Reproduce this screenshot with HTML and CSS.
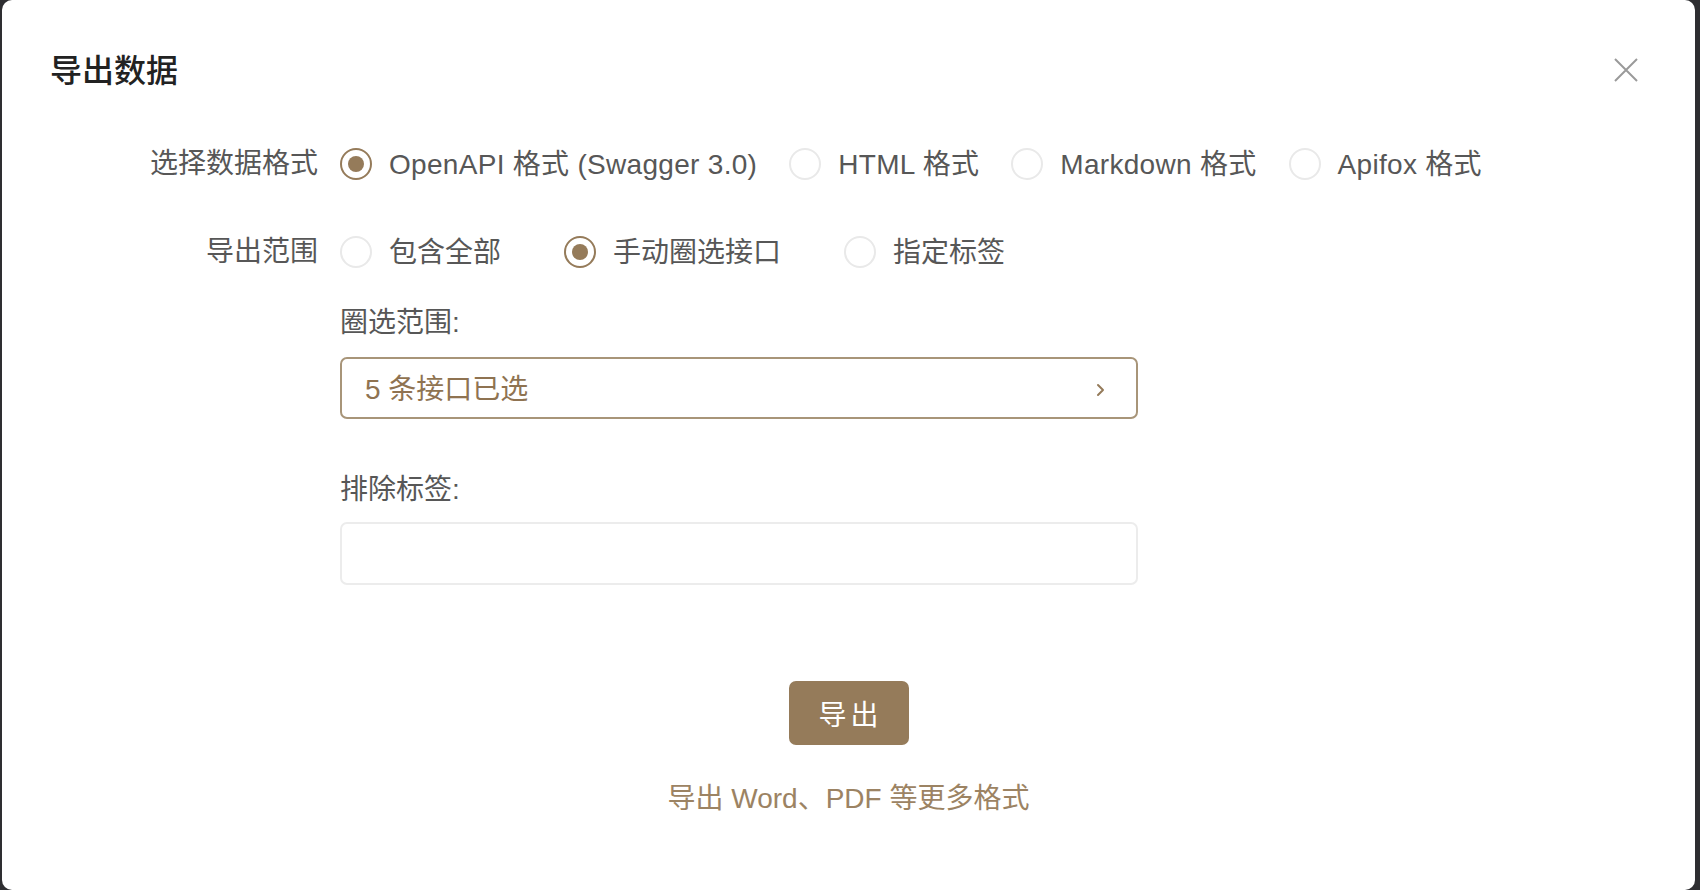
FILE: index.html
```html
<!DOCTYPE html>
<html lang="zh-CN">
<head>
<meta charset="utf-8">
<title>导出数据</title>
<link rel="stylesheet" href="styles.css">
</head>
<body>
<div class="modal">
  <div class="modal-header">
    <h2 class="modal-title">导出数据</h2>
    <button class="close" aria-label="关闭">
      <svg width="24" height="24" viewBox="0 0 24 24"><path d="M1 1 L23 23 M23 1 L1 23" stroke="#9a9a9a" stroke-width="2" fill="none"/></svg>
    </button>
  </div>
  <div class="form">
    <div class="row">
      <div class="label">选择数据格式</div>
      <div class="radios radios-format">
        <label class="radio checked"><span class="dot"></span><span class="text">OpenAPI 格式 (Swagger 3.0)</span></label>
        <label class="radio"><span class="dot"></span><span class="text">HTML 格式</span></label>
        <label class="radio"><span class="dot"></span><span class="text">Markdown 格式</span></label>
        <label class="radio"><span class="dot"></span><span class="text">Apifox 格式</span></label>
      </div>
    </div>
    <div class="row row-scope">
      <div class="label">导出范围</div>
      <div class="radios radios-scope">
        <label class="radio"><span class="dot"></span><span class="text">包含全部</span></label>
        <label class="radio checked"><span class="dot"></span><span class="text">手动圈选接口</span></label>
        <label class="radio"><span class="dot"></span><span class="text">指定标签</span></label>
      </div>
    </div>
    <div class="row row-sub">
      <div class="label"></div>
      <div class="fields">
        <div class="field-label">圈选范围:</div>
        <div class="select">
          <span class="select-value">5 条接口已选</span>
          <svg class="chevron" width="9" height="14" viewBox="0 0 9 14"><path d="M2 2 L7 7 L2 12" stroke="#957b5a" stroke-width="2" fill="none" stroke-linecap="round" stroke-linejoin="round"/></svg>
        </div>
        <div class="field-label field-label-2">排除标签:</div>
        <div class="input"></div>
      </div>
    </div>
  </div>
  <div class="actions">
    <button class="btn-primary">导 出</button>
    <a class="more">导出 Word、PDF 等更多格式</a>
  </div>
</div>
</body>
</html>
```

FILE: styles.css
```css
html, body {
  margin: 0;
  padding: 0;
}
body {
  background: #2e2e31;
  width: 1700px;
  height: 890px;
  overflow: hidden;
  font-family: "Liberation Sans", "Noto Sans CJK SC", sans-serif;
}
.modal {
  position: relative;
  margin: 0 5px 0 2px;
  height: 890px;
  background: #ffffff;
  border-radius: 10px;
  box-sizing: border-box;
}
.modal-header {
  padding: 48px 0 0 48px;
}
.modal-title {
  margin: 0;
  font-family: "Noto Sans CJK SC", sans-serif;
  font-size: 32px;
  line-height: 40px;
  font-weight: 500;
  color: #222222;
}
.close {
  position: absolute;
  top: 58px;
  right: 57px;
  width: 24px;
  height: 24px;
  padding: 0;
  border: 0;
  background: none;
  display: block;
}
.close svg { display: block; }
.form {
  margin-top: 56px;
}
.row {
  display: grid;
  grid-template-columns: 316px 798px;
  column-gap: 22px;
  align-items: start;
}
.row-scope {
  margin-top: 48px;
}
.label {
  text-align: right;
  font-size: 28px;
  line-height: 40px;
  color: #575757;
}
.radios {
  display: flex;
  align-items: center;
  height: 40px;
  white-space: nowrap;
}
.radios-format { gap: 32px; }
.radios-format .text { letter-spacing: 0.3px; }
.radios-scope { gap: 63px; }
.radio {
  display: flex;
  align-items: center;
  gap: 17px;
  font-size: 28px;
  line-height: 40px;
  color: #575757;
}
.text {
  padding-top: 2px;
}
.dot {
  width: 32px;
  height: 32px;
  box-sizing: border-box;
  border: 2px solid #e9e9e9;
  border-radius: 50%;
  display: flex;
  align-items: center;
  justify-content: center;
  flex: none;
}
.radio.checked .dot {
  border-color: #957b5a;
}
.radio.checked .dot::after {
  content: "";
  width: 16px;
  height: 16px;
  border-radius: 50%;
  background: #957b5a;
}
.fields {
  display: flex;
  flex-direction: column;
}
.field-label {
  margin-top: 31px;
  font-size: 28px;
  line-height: 40px;
  color: #575757;
}
.field-label-2 {
  margin-top: 51px;
}
.select {
  margin-top: 14px;
  height: 62px;
  box-sizing: border-box;
  border: 2px solid #a89579;
  border-radius: 7px;
  display: flex;
  align-items: center;
  justify-content: space-between;
  padding: 3px 31px 0 23px;
}
.select-value {
  font-size: 28px;
  line-height: 40px;
  color: #8f7351;
}
.chevron { display: block; }
.input {
  margin-top: 12px;
  height: 63px;
  box-sizing: border-box;
  border: 2px solid #ececec;
  border-radius: 7px;
}
.actions {
  display: flex;
  flex-direction: column;
  align-items: center;
  margin-top: 96px;
}
.btn-primary {
  width: 120px;
  height: 64px;
  border: 0;
  border-radius: 7px;
  background: #957b5a;
  color: #ffffff;
  font-family: "Liberation Sans", "Noto Sans CJK SC", sans-serif;
  font-size: 28px;
  word-spacing: -4px;
  padding: 0;
}
.more {
  margin-top: 34px;
  font-size: 28px;
  line-height: 40px;
  color: #9c8363;
}
```
